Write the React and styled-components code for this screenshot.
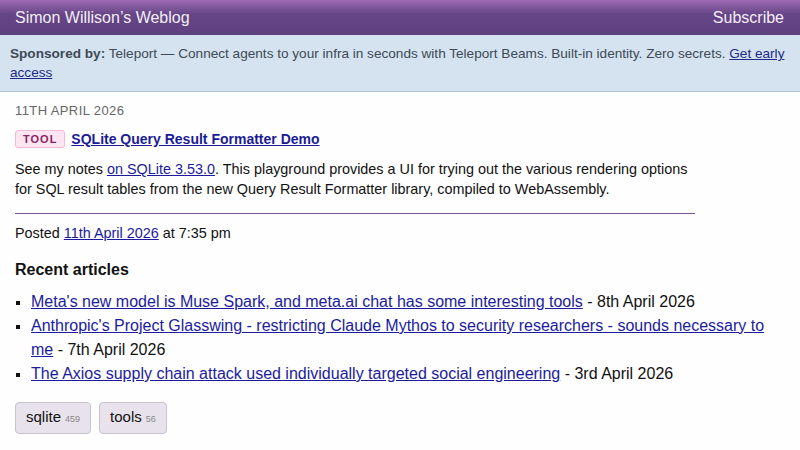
import React from 'react';
import styled, { createGlobalStyle } from 'styled-components';

const GlobalStyle = createGlobalStyle`
  body {
    margin: 0;
    background: #fefefe;
    font-family: "Liberation Sans", Arial, sans-serif;
    color: #111;
  }
`;

const Header = styled.header`
  display: flex;
  align-items: center;
  justify-content: space-between;
  height: 35px;
  padding: 0 16px 0 15px;
  background: linear-gradient(to bottom, #9c6bb3 0%, #664686 40%, #5e3f7f 100%);
  color: #fff;
  font-size: 16px;
  box-sizing: border-box;
`;

const HeaderLink = styled.a`
  color: #f4eef8;
  text-decoration: none;
`;

const Sponsor = styled.div`
  background: #d4e3ef;
  border-bottom: 1px solid #b5c4d1;
  padding: 9px 10px 9px 10px;
  font-size: 13.6px;
  line-height: 19px;
  color: #3e4a56;
`;

const SponsorLink = styled.a`
  color: #1e2a86;
  text-decoration: underline;
  text-decoration-color: #1e2a86;
`;

const Main = styled.main`
  padding: 11px 15px 0;
`;

const Entry = styled.div`
  width: 692px;
`;

const DateLine = styled.div`
  font-size: 13px;
  color: #666;
  letter-spacing: 0.4px;
  text-transform: uppercase;
  margin-bottom: 12px;
`;

const TitleRow = styled.div`
  display: flex;
  align-items: center;
  gap: 6px;
`;

const Badge = styled.span`
  display: inline-block;
  padding: 2px 7px;
  background: #fde6f2;
  border: 1px solid #f2b9d8;
  border-radius: 3px;
  color: #8c2260;
  font-size: 11px;
  font-weight: bold;
  letter-spacing: 1px;
`;

const TitleLink = styled.a`
  font-size: 14px;
  font-weight: bold;
  color: #1b1b96;
  text-decoration: underline;
`;

const Body = styled.p`
  margin: 11px 0 14px;
  font-size: 14.4px;
  line-height: 20px;
`;

const Link = styled.a`
  color: #1b1b9e;
  text-decoration: underline;
`;

const Rule = styled.hr`
  width: 680px;
  border: 0;
  border-top: 1px solid #7d5a8f;
  margin: 0 0 11px;
`;

const Posted = styled.div`
  font-size: 14.4px;
`;

const Heading = styled.h3`
  margin: 20px 0 11px;
  font-size: 16px;
  font-weight: bold;
`;

const List = styled.ul`
  margin: 0;
  padding: 0 0 0 16px;
  list-style: square;
  font-size: 16px;
  line-height: 24px;
  max-width: 760px;
`;

const Item = styled.li`
  &::marker {
    font-size: 13px;
  }
`;

const Tags = styled.div`
  display: flex;
  gap: 8px;
  margin-top: 16px;
`;

const Tag = styled.a`
  display: inline-flex;
  align-items: baseline;
  gap: 4px;
  padding: 4px 10px;
  background: #e7e2ec;
  border: 1px solid #c9c3cd;
  border-radius: 4px;
  color: #111;
  text-decoration: none;
  font-size: 15px;
  line-height: 20px;
`;

const Count = styled.span`
  font-size: 9px;
  color: #888;
`;

const articles = [
  { title: "Meta's new model is Muse Spark, and meta.ai chat has some interesting tools", date: '8th April 2026' },
  { title: "Anthropic's Project Glasswing - restricting Claude Mythos to security researchers - sounds necessary to me", date: '7th April 2026' },
  { title: 'The Axios supply chain attack used individually targeted social engineering', date: '3rd April 2026' },
];

export default function App() {
  return (
    <>
      <GlobalStyle />
      <Header>
        <HeaderLink href="#">Simon Willison’s Weblog</HeaderLink>
        <HeaderLink href="#">Subscribe</HeaderLink>
      </Header>
      <Sponsor>
        <strong>Sponsored by:</strong> Teleport — Connect agents to your infra in seconds with Teleport Beams. Built-in identity. Zero secrets. <SponsorLink href="#">Get early access</SponsorLink>
      </Sponsor>
      <Main>
        <Entry>
          <DateLine>11th April 2026</DateLine>
          <TitleRow>
            <Badge>TOOL</Badge>
            <TitleLink href="#">SQLite Query Result Formatter Demo</TitleLink>
          </TitleRow>
          <Body>
            See my notes <Link href="#">on SQLite 3.53.0</Link>. This playground provides a UI for trying out the various rendering options for SQL result tables from the new Query Result Formatter library, compiled to WebAssembly.
          </Body>
          <Rule />
          <Posted>
            Posted <Link href="#">11th April 2026</Link> at 7:35 pm
          </Posted>
        </Entry>
        <Heading>Recent articles</Heading>
        <List>
          {articles.map((a) => (
            <Item key={a.title}>
              <Link href="#">{a.title}</Link> - {a.date}
            </Item>
          ))}
        </List>
        <Tags>
          <Tag href="#">sqlite <Count>459</Count></Tag>
          <Tag href="#">tools <Count>56</Count></Tag>
        </Tags>
      </Main>
    </>
  );
}
